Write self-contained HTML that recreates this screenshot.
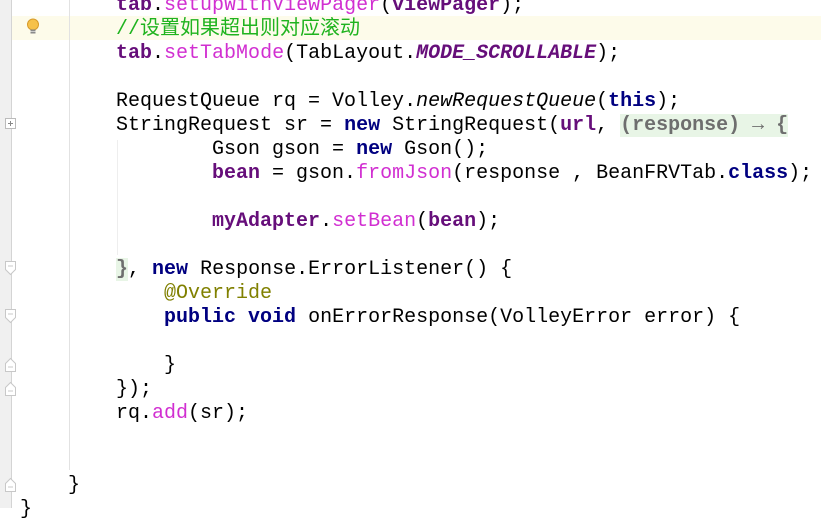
<!DOCTYPE html>
<html><head><meta charset="utf-8"><style>
html,body{margin:0;padding:0;}
body{width:821px;height:508px;overflow:hidden;background:#fff;position:relative;font-family:"Liberation Mono","Noto Sans CJK SC",monospace;font-size:20px;}
.gut{position:absolute;left:0;top:0;width:11px;height:508px;background:#f0f0f0;border-right:1px solid #d4d4d4;}
.guide{position:absolute;width:1px;background:#e2e2e2;}
.hl{position:absolute;left:0;top:16px;width:821px;height:24px;background:#fdfbea;}
.l{position:absolute;left:20px;white-space:pre;height:24px;line-height:24px;color:#000;margin-top:3px;}
.k{color:#000080;font-weight:bold;}
.m{color:#d12fd1;}
.f{color:#660e7a;font-weight:bold;}
.s{color:#660e7a;font-weight:bold;font-style:italic;}
.i{font-style:italic;}
.c{color:#1fb31f;}
.a{color:#808000;}
.fold{background:#e8f5e6;color:#6e6e6e;font-weight:bold;}
.fm{position:absolute;left:5px;width:11px;height:11px;}
</style></head><body>
<div class="hl"></div>
<div class="gut"></div>
<div class="guide" style="left:69px;top:0;height:470px;"></div>
<div class="guide" style="left:117px;top:140px;height:115px;background:#eee;"></div>
<svg style="position:absolute;left:26px;top:18px" width="14" height="18" viewBox="0 0 14 18"><circle cx="7" cy="6.5" r="5.5" fill="#f6c14a" stroke="#d79a2a"/><rect x="4.5" y="11.5" width="5" height="4" fill="#8a8a8a"/><line x1="4.5" y1="13.5" x2="9.5" y2="13.5" stroke="#ccc"/></svg>
<svg class="fm" style="top:118px" viewBox="0 0 11 11"><rect x="0.5" y="0.5" width="10" height="10" fill="#fff" stroke="#bbb"/><path d="M3 5.5h5M5.5 3v5" stroke="#888"/></svg>
<svg class="fm" style="top:261px;height:15px" viewBox="0 0 11 15"><path d="M0.5 0.5h10v8l-5 5l-5-5z" fill="#fff" stroke="#c8c8c8"/><path d="M3 5h5" stroke="#c8c8c8"/></svg>
<svg class="fm" style="top:309px;height:15px" viewBox="0 0 11 15"><path d="M0.5 0.5h10v8l-5 5l-5-5z" fill="#fff" stroke="#c8c8c8"/><path d="M3 5h5" stroke="#c8c8c8"/></svg>
<svg class="fm" style="top:357px;height:15px" viewBox="0 0 11 15"><path d="M0.5 14.5h10v-8l-5-5l-5 5z" fill="#fff" stroke="#c8c8c8"/><path d="M3 10h5" stroke="#c8c8c8"/></svg>
<svg class="fm" style="top:381px;height:15px" viewBox="0 0 11 15"><path d="M0.5 14.5h10v-8l-5-5l-5 5z" fill="#fff" stroke="#c8c8c8"/><path d="M3 10h5" stroke="#c8c8c8"/></svg>
<svg class="fm" style="top:477px;height:15px" viewBox="0 0 11 15"><path d="M0.5 14.5h10v-8l-5-5l-5 5z" fill="#fff" stroke="#c8c8c8"/><path d="M3 10h5" stroke="#c8c8c8"/></svg>

<div class="l" style="top:-9px">        <span class="f">tab</span>.<span class="m">setupWithViewPager</span>(<span class="f">viewPager</span>);</div>
<div class="l" style="top:15px">        <span class="c">//设置如果超出则对应滚动</span></div>
<div class="l" style="top:39px">        <span class="f">tab</span>.<span class="m">setTabMode</span>(TabLayout.<span class="s">MODE_SCROLLABLE</span>);</div>
<div class="l" style="top:87px">        RequestQueue rq = Volley.<span class="i">newRequestQueue</span>(<span class="k">this</span>);</div>
<div class="l" style="top:111px">        StringRequest sr = <span class="k">new</span> StringRequest(<span class="f">url</span>, <span class="fold">(response) → {</span></div>
<div class="l" style="top:135px">                Gson gson = <span class="k">new</span> Gson();</div>
<div class="l" style="top:159px">                <span class="f">bean</span> = gson.<span class="m">fromJson</span>(response , BeanFRVTab.<span class="k">class</span>);</div>
<div class="l" style="top:207px">                <span class="f">myAdapter</span>.<span class="m">setBean</span>(<span class="f">bean</span>);</div>
<div class="l" style="top:255px">        <span class="fold">}</span>, <span class="k">new</span> Response.ErrorListener() {</div>
<div class="l" style="top:279px">            <span class="a">@Override</span></div>
<div class="l" style="top:303px">            <span class="k">public void</span> onErrorResponse(VolleyError error) {</div>
<div class="l" style="top:351px">            }</div>
<div class="l" style="top:375px">        });</div>
<div class="l" style="top:399px">        rq.<span class="m">add</span>(sr);</div>
<div class="l" style="top:471px">    }</div>
<div class="l" style="top:495px">}</div>
</body></html>
